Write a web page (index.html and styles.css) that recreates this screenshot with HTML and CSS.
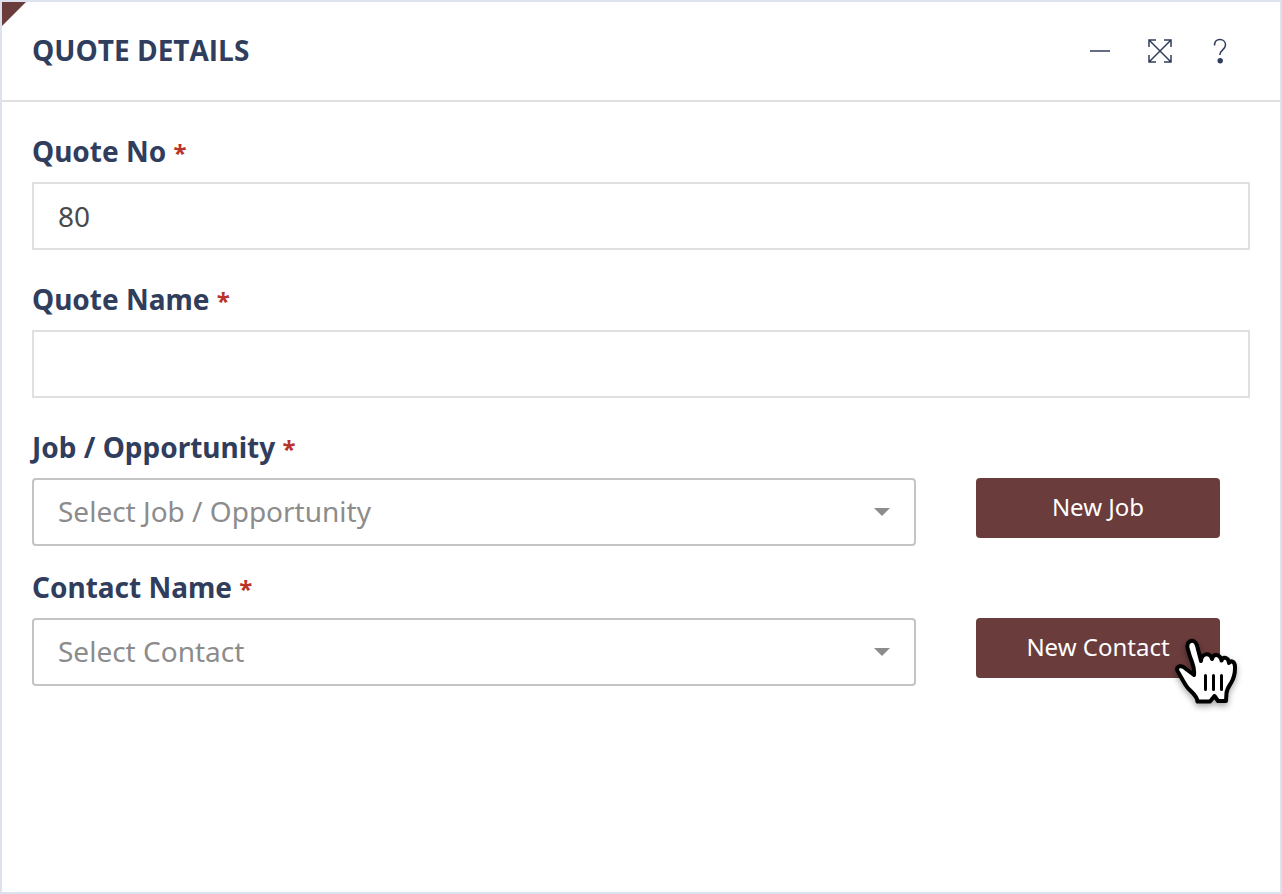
FILE: index.html
```html
<!DOCTYPE html>
<html lang="en">
<head>
<meta charset="utf-8">
<title>Quote Details</title>
<link rel="stylesheet" href="styles.css">
</head>
<body>
<main class="panel">
  <header class="panel-header">
    <h1 class="panel-title">QUOTE DETAILS</h1>
    <div class="panel-tools">
      <button class="tool" type="button" aria-label="Minimise">
        <svg viewBox="0 0 28 28"><path d="M4 14h20"/></svg>
      </button>
      <button class="tool" type="button" aria-label="Expand">
        <svg viewBox="0 0 28 28"><path d="M3 3l22 22M25 3L3 25M3 10V3h7M18 3h7v7M25 18v7h-7M10 25H3v-7"/></svg>
      </button>
      <button class="tool" type="button" aria-label="Help">
        <svg viewBox="0 0 28 28"><path d="M8.500 8.500C8.500 4.500 11 2.500 14 2.500s5.500 2.200 5.500 5.300c0 5-5.700 5.200-5.700 10.200"/><circle cx="14.200" cy="23.700" r="2.700"/></svg>
      </button>
    </div>
  </header>
  <form class="form">
    <div class="field">
      <label class="label" for="quote-no">Quote No <span class="required">*</span></label>
      <input class="input" id="quote-no" type="text" value="80">
    </div>
    <div class="field">
      <label class="label" for="quote-name">Quote Name <span class="required">*</span></label>
      <input class="input" id="quote-name" type="text">
    </div>
    <div class="field field-select">
      <label class="label" for="job">Job / Opportunity <span class="required">*</span></label>
      <div class="row">
        <select class="select" id="job"><option>Select Job / Opportunity</option></select>
        <button class="button" type="button">New Job</button>
      </div>
    </div>
    <div class="field field-select">
      <label class="label" for="contact">Contact Name <span class="required">*</span></label>
      <div class="row">
        <select class="select" id="contact"><option>Select Contact</option></select>
        <div class="button-wrap">
          <button class="button" type="button">New Contact</button>
          <svg class="pointer" viewBox="0 0 64 70" aria-hidden="true">
            <path class="hand" d="M18 25C16 20 14.500 15 13.500 11C12.200 3 20.500 1 23 8.500L27 24C27.500 16 36 15 38 22C39.500 16 46 17 47.500 23.500C49 19 54.500 20 55 26C57 23 61 24.500 61 30C61.200 36 60 41 57 46C54.500 50 53 52 52.500 56L52 64H44L40.500 59L36 64.500H23.500C23 58 17 55 13 50C9 44 6 38 3.500 34C1.500 28.500 8 27.500 12 32L20 38C20.500 34 19.500 29 18 25Z"/>
            <path class="lines" d="M31.500 38.500v14M39.500 38.500v14M47.500 38.500v14"/>
          </svg>
        </div>
      </div>
    </div>
  </form>
</main>
</body>
</html>
```
FILE: styles.css
```css
* {
  box-sizing: border-box;
}

body {
  margin: 0;
  background: #fff;
  color: #303d5c;
  font-family: "Noto Sans", "Open Sans", sans-serif;
}

.panel {
  position: relative;
  min-height: 100vh;
  border: 2px solid #dee1ee;
}

.panel::before {
  content: "";
  position: absolute;
  top: 0;
  left: 0;
  border-top: 24px solid #6b3c3c;
  border-right: 24px solid transparent;
}

.panel-header {
  display: flex;
  align-items: center;
  justify-content: space-between;
  padding: 28px 46px 30px 30px;
  border-bottom: 2px solid #e0e0e0;
}

.panel-title {
  margin: 0;
  font-family: "Open Sans", sans-serif;
  font-size: 28px;
  font-weight: 700;
  line-height: 40px;
}

.panel-tools {
  display: flex;
  gap: 32px;
  padding-top: 2px;
}

.tool {
  width: 28px;
  height: 28px;
  padding: 0;
  border: 0;
  background: none;
}

.tool svg {
  display: block;
  fill: none;
  stroke: #303d5c;
  stroke-width: 1.5;
}

.tool circle {
  fill: #303d5c;
  stroke: none;
}

.form {
  padding: 30px;
}

.field {
  margin-bottom: 30px;
}

.field-select {
  margin-bottom: 22px;
}

.label {
  display: block;
  margin-bottom: 12px;
  font-size: 28px;
  font-weight: 700;
  line-height: 38px;
}

.required {
  color: #b9332b;
  font-size: 24px;
  line-height: 1;
}

.input,
.select {
  display: block;
  width: 100%;
  height: 68px;
  padding: 0 24px;
  border: 2px solid #e0e0e0;
  background-color: #fff;
  color: #4a4a4a;
  font: 28px "Noto Sans", "Open Sans", sans-serif;
}

.select {
  appearance: none;
  padding-bottom: 2px;
  border-color: #c4c4c4;
  border-radius: 4px;
  background-image: url("data:image/svg+xml,%3Csvg xmlns='http://www.w3.org/2000/svg' width='16' height='8'%3E%3Cpath d='M0 0h16L8 8z' fill='%238c8c8c'/%3E%3C/svg%3E");
  background-repeat: no-repeat;
  background-position: right 24px center;
  color: #8c8c8c;
}

.row {
  display: grid;
  grid-template-columns: 1fr 244px;
  gap: 60px;
  align-items: start;
  padding-right: 30px;
}

.button-wrap {
  position: relative;
}

.button {
  width: 100%;
  height: 60px;
  padding: 0 0 2px;
  border: 0;
  border-radius: 4px;
  background: #6b3c3c;
  color: #fff;
  font: 24px/58px "Noto Sans", "Open Sans", sans-serif;
}

.pointer {
  position: absolute;
  top: 19px;
  right: -18px;
  width: 64px;
  height: 70px;
  overflow: visible;
  filter: drop-shadow(0 3px 3px rgba(0, 0, 0, 0.35));
}

.hand {
  fill: #fff;
  stroke: #000;
  stroke-width: 4;
  stroke-linejoin: round;
}

.lines {
  fill: none;
  stroke: #000;
  stroke-width: 3;
  stroke-linecap: round;
}
```
